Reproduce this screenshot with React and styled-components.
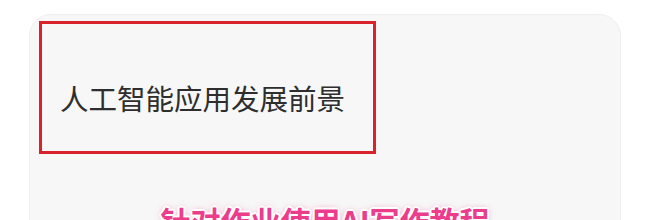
import React from 'react';
import styled, { createGlobalStyle } from 'styled-components';

const Global = createGlobalStyle`
    html, body {
        margin: 0;
        padding: 0;
        background: #ffffff;
        overflow: hidden;
    }
    body {
        font-family: "Noto Sans CJK SC", "Noto Sans", sans-serif;
    }
`;

const S = {
    Page: styled.div`
        width: 650px;
        height: 220px;
        padding: 14px 0 0 29px;
        box-sizing: border-box;
    `,
    Card: styled.div`
        width: 592px;
        height: 280px;
        box-sizing: border-box;
        background: #f7f7f7;
        border: 1px solid #efefef;
        border-radius: 22px;
        padding: 6px 0 0 9px;
        display: flex;
        flex-direction: column;
    `,
    Highlight: styled.div`
        width: 337px;
        height: 133px;
        box-sizing: border-box;
        border: 3px solid #d8232c;
        display: flex;
        align-items: center;
        padding: 20px 0 0 18px;
    `,
    Title: styled.h1`
        margin: 0;
        font-size: 28.5px;
        font-weight: 400;
        color: #2e2e2e;
        letter-spacing: 0;
        white-space: nowrap;
    `,
    Caption: styled.div`
        margin-top: 44px;
        margin-left: -9px;
        text-align: center;
        font-size: 30px;
        font-weight: 700;
        color: #ec3d8c;
        white-space: nowrap;
        text-shadow:
            -2px 0 #fff, 2px 0 #fff, 0 -2px #fff, 0 2px #fff,
            -1.5px -1.5px #fff, 1.5px 1.5px #fff, -1.5px 1.5px #fff, 1.5px -1.5px #fff,
            0 0 6px rgba(236, 61, 140, 0.6);
    `,
};

const App = () => {
    return (
        <>
            <Global />
            <S.Page>
                <S.Card>
                    <S.Highlight>
                        <S.Title>人工智能应用发展前景</S.Title>
                    </S.Highlight>
                    <S.Caption>针对作业使用AI写作教程</S.Caption>
                </S.Card>
            </S.Page>
        </>
    );
};

export default App;
